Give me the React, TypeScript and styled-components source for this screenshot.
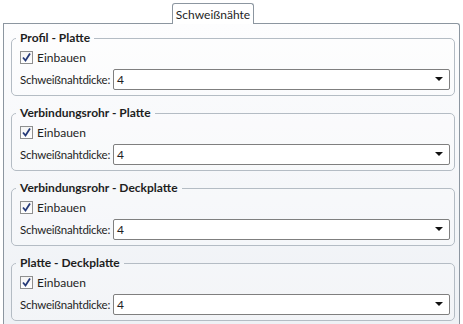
import React from 'react'
import styled, { createGlobalStyle } from 'styled-components'

const GlobalStyle = createGlobalStyle`
  html, body {
    margin: 0;
    padding: 0;
    background: #ffffff;
  }
  body {
    font-family: Lato, 'Noto Sans', sans-serif;
    font-size: 12px;
    color: #1e1e1e;
  }
`

const sections = [
  { title: 'Profil - Platte', thickness: '4' },
  { title: 'Verbindungsrohr - Platte', thickness: '4' },
  { title: 'Verbindungsrohr - Deckplatte', thickness: '4' },
  { title: 'Platte - Deckplatte', thickness: '4' },
]

const Wrapper = styled.div`
  width: 463px;
  height: 324px;
  display: flex;
  flex-direction: column;
  overflow: hidden;
`

const TabStrip = styled.div`
  height: 23px;
  display: flex;
  align-items: flex-end;
  padding-left: 172px;
  flex-shrink: 0;
`

const Tab = styled.div`
  height: 21px;
  width: 82px;
  box-sizing: border-box;
  border: 1px solid #8c96a0;
  border-bottom: none;
  border-radius: 3px 3px 0 0;
  background: #ffffff;
  display: flex;
  align-items: center;
  justify-content: center;
  font-size: 12px;
  margin-bottom: -1px;
  position: relative;
  z-index: 1;
`

const Panel = styled.div`
  flex: 1;
  margin: 0 3px 0 3px;
  border: 1px solid #8c96a0;
  border-bottom: none;
  border-radius: 0 3px 0 0;
  background: linear-gradient(#fdfdfe, #eef1f5);
  padding: 6px 4px 0 7px;
  display: flex;
  flex-direction: column;
  gap: 9px;
`

const Group = styled.fieldset`
  margin: 0;
  border: 1px solid #b4bcc4;
  border-radius: 5px;
  padding: 2px 4px 5px 8px;
  display: flex;
  flex-direction: column;
  gap: 2px;
  background: rgba(255, 255, 255, 0.25);
`

const Legend = styled.legend`
  font-weight: 700;
  padding: 0 4px;
  margin-left: -4px;
  line-height: 16px;
`

const CheckRow = styled.label`
  display: flex;
  align-items: center;
  gap: 4px;
  height: 18px;
`

const Box = styled.span`
  width: 11px;
  height: 11px;
  border: 1px solid #8e8f8f;
  background: linear-gradient(#f4f4f4, #ffffff);
  display: flex;
  align-items: center;
  justify-content: center;
`

const FieldRow = styled.div`
  display: flex;
  align-items: center;
  gap: 3px;
  height: 22px;
`

const FieldLabel = styled.span`
  white-space: nowrap;
  flex-shrink: 0;
  font-size: 11.5px;
  letter-spacing: -0.25px;
`

const Combo = styled.div`
  flex: 1;
  height: 21px;
  box-sizing: border-box;
  border: 1px solid #7f7f7f;
  border-radius: 2px;
  background: #ffffff;
  display: flex;
  align-items: center;
  justify-content: space-between;
  padding: 0 6px 0 3px;
`

const Arrow = styled.span`
  width: 0;
  height: 0;
  border-left: 4px solid transparent;
  border-right: 4px solid transparent;
  border-top: 4px solid #111;
`

const Check = () => (
  <svg width="11" height="11" viewBox="0 0 11 11">
    <path d="M2 5.5 L4.5 8.5 L9 1.5" fill="none" stroke="#253a78" strokeWidth="1.8" />
  </svg>
)

export default function App() {
  return (
    <Wrapper>
      <GlobalStyle />
      <TabStrip>
        <Tab>Schweißnähte</Tab>
      </TabStrip>
      <Panel>
        {sections.map((s) => (
          <Group key={s.title}>
            <Legend>{s.title}</Legend>
            <CheckRow>
              <Box>
                <Check />
              </Box>
              Einbauen
            </CheckRow>
            <FieldRow>
              <FieldLabel>Schweißnahtdicke:</FieldLabel>
              <Combo>
                {s.thickness}
                <Arrow />
              </Combo>
            </FieldRow>
          </Group>
        ))}
      </Panel>
    </Wrapper>
  )
}
